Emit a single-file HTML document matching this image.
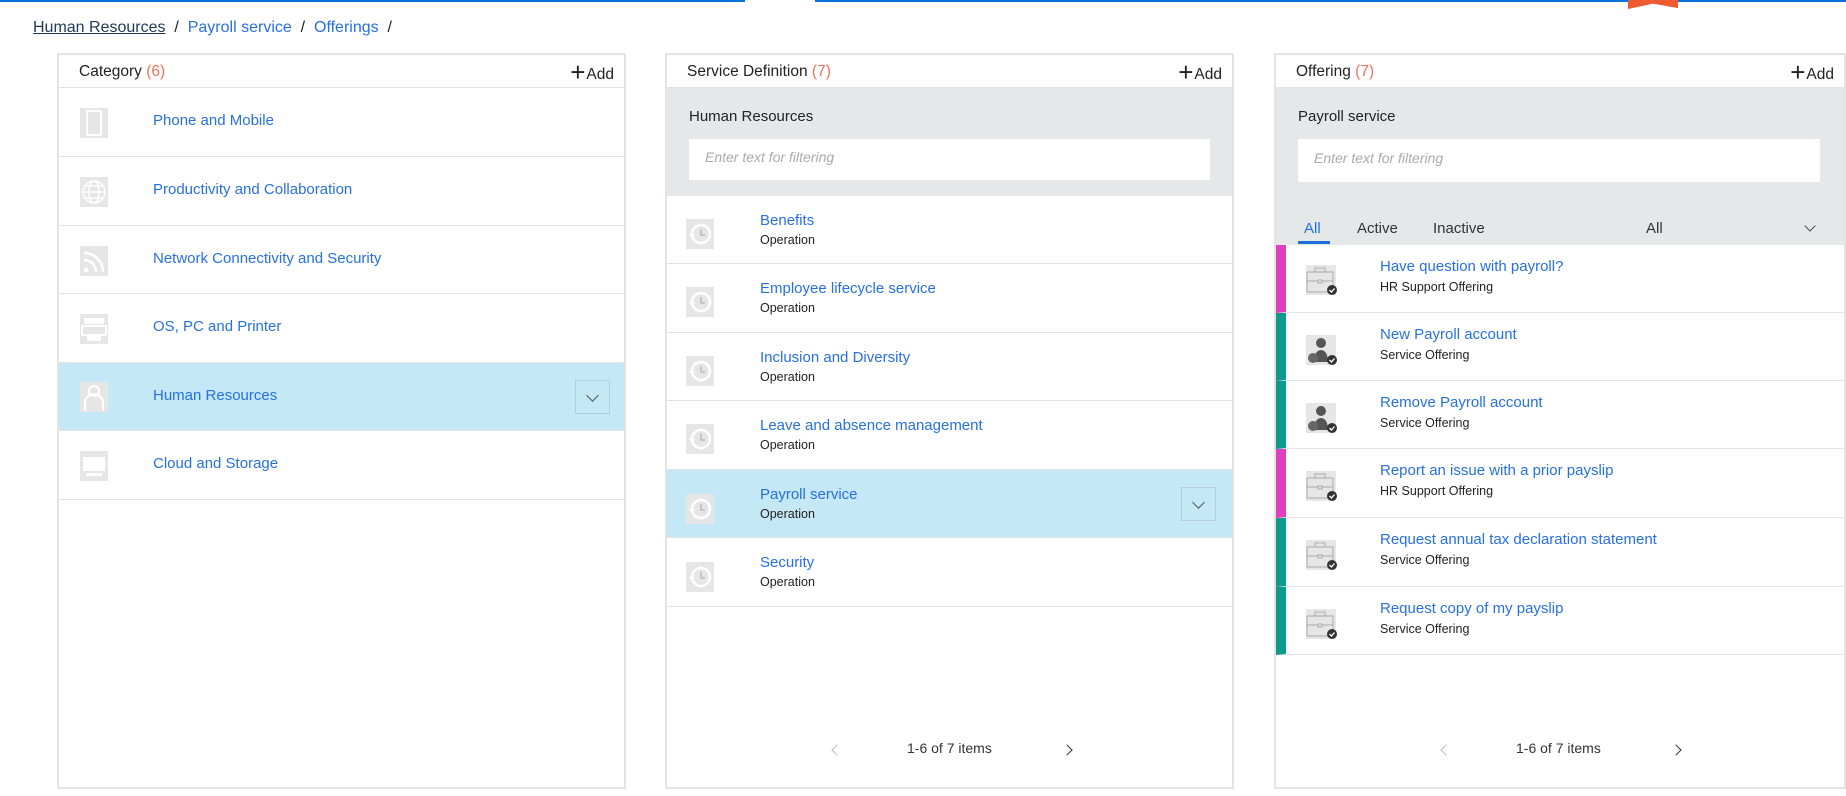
<!DOCTYPE html>
<html><head><meta charset="utf-8"><style>
*{box-sizing:border-box;margin:0;padding:0}
body{width:1846px;height:796px;position:relative;background:#fff;font-family:"Liberation Sans",sans-serif;overflow:hidden;color:#222}
.a{position:absolute}
.lnk{color:#2770e0}
.panel{position:absolute;top:53px;height:736px;border:2px solid #e4e4e4;background:#fff}
.hdr{position:absolute;left:0;right:0;top:0;height:33px;border-bottom:1px solid #e4e4e4;font-size:15.5px}
.hdr .t{position:absolute;left:20px;top:8px}
.hdr .t span{color:#f0705a}
.hdr .add{position:absolute;right:10px;top:3px;font-size:15.5px;line-height:24px}
.hdr .add b{font-weight:normal;font-size:26px;position:relative;top:2px;margin-right:1px}
.row{position:absolute;left:0;right:0;border-bottom:1px solid #e4e4e4}
.ico{position:absolute;width:28px;height:30px;background:#e6e6e6}
.ico svg{position:absolute;left:0;top:0}
.sel{background:#c5e8f7}
.chev{position:absolute;width:35px;height:34px;border:1px solid #b9ccd6}
.chev:after{content:"";position:absolute;left:12px;top:10px;width:8px;height:8px;border-right:1px solid #555;border-bottom:1px solid #555;transform:rotate(45deg)}
.tt{position:absolute;font-size:15px;color:#2770e0}
.st{position:absolute;font-size:12.5px;color:#222}
.gray{position:absolute;left:0;right:0;background:#e5e8e9}
.inp{position:absolute;background:#fff;font-size:14px;font-style:italic;color:#aaa;padding:10px 16px}
.pg{position:absolute;font-size:14px;color:#333}
.ar{position:absolute;width:8px;height:8px;border-right:1.5px solid #333;border-top:1.5px solid #333;transform:rotate(45deg)}
.ar.l{transform:rotate(-135deg);border-color:#bbb}
</style></head><body>
<div class="a" style="left:0;top:0;width:1846px;height:2px;background:#0a74d8"></div>
<div class="a" style="left:745px;top:0;width:70px;height:2px;background:#fff"></div>
<div class="a" style="left:1628px;top:0;width:50px;height:9px;background:#f05a30;clip-path:polygon(0 0,100% 0,100% 90%,50% 40%,0 100%)"></div>

<div class="a" style="left:33px;top:19px;font-size:16px">
<span style="color:#203a5a;text-decoration:underline">Human Resources</span>&nbsp; / &nbsp;<span class="lnk">Payroll service</span>&nbsp; / &nbsp;<span class="lnk">Offerings</span>&nbsp; /
</div>

<svg width="0" height="0" style="position:absolute">
<defs>
<symbol id="clk" viewBox="0 0 28 30"><circle cx="15" cy="15" r="9" fill="none" stroke="#fff" stroke-width="2.5"/><path d="M15 10v6h4" fill="none" stroke="#bbb" stroke-width="1.5"/><path d="M3 15l3 4 3-4" fill="#fff"/></symbol>
<symbol id="brf" viewBox="0 0 32 30"><rect x="1" y="7" width="26" height="20" fill="none" stroke="#aaa" stroke-width="1"/><rect x="9" y="3" width="10" height="4" fill="none" stroke="#aaa"/><path d="M1 16h26" stroke="#aaa"/><rect x="12" y="15" width="4" height="3" fill="#e6e6e6" stroke="#aaa"/><circle cx="26" cy="25" r="5" fill="#333"/><path d="M23.5 25l2 2 3-3.5" fill="none" stroke="#fff" stroke-width="1.3"/></symbol>
<symbol id="usr" viewBox="0 0 32 30"><circle cx="15" cy="8" r="5" fill="#555"/><path d="M8 27c0-8 3-12 7-12s7 4 7 12z" fill="#555"/><circle cx="7" cy="23" r="5" fill="#666"/><circle cx="26" cy="25" r="5" fill="#333"/><path d="M23.5 25l2 2 3-3.5" fill="none" stroke="#fff" stroke-width="1.3"/></symbol>
</defs></svg>

<!-- Category -->
<div class="panel" style="left:57px;width:569px">
<div class="hdr"><div class="t">Category <span>(6)</span></div><div class="add"><b>+</b>Add</div></div>
<div class="row" style="top:33px;height:69px"><div class="ico" style="left:21px;top:20px"><svg width="28" height="30"><rect x="7" y="3" width="14" height="24" fill="none" stroke="#fff" stroke-width="2"/></svg></div><div class="tt" style="left:94px;top:24px">Phone and Mobile</div></div>
<div class="row" style="top:102px;height:69px"><div class="ico" style="left:21px;top:20px"><svg width="28" height="30"><circle cx="14" cy="15" r="11" fill="none" stroke="#fff" stroke-width="1.5"/><ellipse cx="14" cy="15" rx="5" ry="11" fill="none" stroke="#fff" stroke-width="1.5"/><path d="M3 15h22M5 9h18M5 21h18" stroke="#fff" stroke-width="1.5"/></svg></div><div class="tt" style="left:94px;top:24px">Productivity and Collaboration</div></div>
<div class="row" style="top:171px;height:68px"><div class="ico" style="left:21px;top:20px"><svg width="28" height="30"><circle cx="6" cy="24" r="2.5" fill="#fff"/><path d="M4 14a12 12 0 0 1 12 12M4 7a19 19 0 0 1 19 19" fill="none" stroke="#fff" stroke-width="2.5"/></svg></div><div class="tt" style="left:94px;top:24px">Network Connectivity and Security</div></div>
<div class="row" style="top:239px;height:69px"><div class="ico" style="left:21px;top:20px"><svg width="28" height="30"><rect x="4" y="4" width="20" height="6" fill="#fff"/><rect x="2" y="12" width="24" height="9" fill="none" stroke="#fff" stroke-width="2"/><rect x="7" y="22" width="14" height="5" fill="#fff"/></svg></div><div class="tt" style="left:94px;top:24px">OS, PC and Printer</div></div>
<div class="row sel" style="top:308px;height:68px"><div class="ico" style="left:21px;top:19px"><svg width="28" height="30"><circle cx="14" cy="9" r="5" fill="none" stroke="#fff" stroke-width="2"/><path d="M5 29v-8a9 9 0 0 1 18 0v8" fill="none" stroke="#fff" stroke-width="2"/></svg></div><div class="tt" style="left:94px;top:24px">Human Resources</div><div class="chev" style="left:516px;top:17px"></div></div>
<div class="row" style="top:376px;height:69px"><div class="ico" style="left:21px;top:20px"><svg width="28" height="30"><rect x="3" y="6" width="22" height="14" fill="#fff"/><rect x="6" y="22" width="16" height="3" fill="#fff"/></svg></div><div class="tt" style="left:94px;top:24px">Cloud and Storage</div></div>
</div>

<!-- Service -->
<div class="panel" style="left:665px;width:569px">
<div class="hdr"><div class="t">Service Definition <span>(7)</span></div><div class="add"><b>+</b>Add</div></div>
<div class="gray" style="top:33px;height:108px"><div class="a" style="left:22px;top:20px;font-size:15px">Human Resources</div><div class="inp" style="left:22px;top:51px;width:521px;height:41px">Enter text for filtering</div></div>
<div class="row" style="top:141px;height:68px"><div class="ico" style="left:19px;top:23px"><svg width="28" height="30"><use href="#clk"/></svg></div><div class="tt" style="left:93px;top:16px">Benefits</div><div class="st" style="left:93px;top:37px">Operation</div></div>
<div class="row" style="top:209px;height:69px"><div class="ico" style="left:19px;top:23px"><svg width="28" height="30"><use href="#clk"/></svg></div><div class="tt" style="left:93px;top:16px">Employee lifecycle service</div><div class="st" style="left:93px;top:37px">Operation</div></div>
<div class="row" style="top:278px;height:68px"><div class="ico" style="left:19px;top:23px"><svg width="28" height="30"><use href="#clk"/></svg></div><div class="tt" style="left:93px;top:16px">Inclusion and Diversity</div><div class="st" style="left:93px;top:37px">Operation</div></div>
<div class="row" style="top:346px;height:69px"><div class="ico" style="left:19px;top:23px"><svg width="28" height="30"><use href="#clk"/></svg></div><div class="tt" style="left:93px;top:16px">Leave and absence management</div><div class="st" style="left:93px;top:37px">Operation</div></div>
<div class="row sel" style="top:415px;height:68px"><div class="ico" style="left:19px;top:24px"><svg width="28" height="30"><use href="#clk"/></svg></div><div class="tt" style="left:93px;top:16px">Payroll service</div><div class="st" style="left:93px;top:37px">Operation</div><div class="chev" style="left:514px;top:17px"></div></div>
<div class="row" style="top:483px;height:69px"><div class="ico" style="left:19px;top:24px"><svg width="28" height="30"><use href="#clk"/></svg></div><div class="tt" style="left:93px;top:16px">Security</div><div class="st" style="left:93px;top:37px">Operation</div></div>
<div class="ar l" style="left:166px;top:691px"></div>
<div class="pg" style="left:240px;top:685px">1-6 of 7 items</div>
<div class="ar" style="left:396px;top:691px"></div>
</div>

<!-- Offering -->
<div class="panel" style="left:1274px;width:572px">
<div class="hdr"><div class="t">Offering <span>(7)</span></div><div class="add"><b>+</b>Add</div></div>
<div class="gray" style="top:33px;height:157px">
<div class="a" style="left:22px;top:20px;font-size:15px">Payroll service</div>
<div class="inp" style="left:22px;top:51px;width:522px;height:43px;padding-top:11px">Enter text for filtering</div>
<div class="a" style="left:28px;top:132px;font-size:15px;color:#2770e0">All</div>
<div class="a" style="left:22px;top:153px;width:32px;height:3px;background:#1a6fd8"></div>
<div class="a" style="left:81px;top:132px;font-size:15px;color:#333">Active</div>
<div class="a" style="left:157px;top:132px;font-size:15px;color:#333">Inactive</div>
<div class="a" style="left:370px;top:132px;font-size:15px;color:#333">All</div>
<div class="a" style="left:530px;top:134px;width:8px;height:8px;border-right:1px solid #444;border-bottom:1px solid #444;transform:rotate(45deg)"></div>
</div>
<div class="row" style="top:190px;height:68px;border-left:10px solid #e040c0"><div class="ico" style="left:20px;top:20px;width:30px;background:#e6e6e6"><svg width="32" height="30" style="overflow:visible"><use href="#brf"/></svg></div><div class="tt" style="left:94px;top:13px">Have question with payroll?</div><div class="st" style="left:94px;top:35px">HR Support Offering</div></div>
<div class="row" style="top:258px;height:68px;border-left:10px solid #0e9b8e"><div class="ico" style="left:20px;top:22px;width:30px"><svg width="32" height="30" style="overflow:visible"><use href="#usr"/></svg></div><div class="tt" style="left:94px;top:13px">New Payroll account</div><div class="st" style="left:94px;top:35px">Service Offering</div></div>
<div class="row" style="top:326px;height:68px;border-left:10px solid #0e9b8e"><div class="ico" style="left:20px;top:22px;width:30px"><svg width="32" height="30" style="overflow:visible"><use href="#usr"/></svg></div><div class="tt" style="left:94px;top:13px">Remove Payroll account</div><div class="st" style="left:94px;top:35px">Service Offering</div></div>
<div class="row" style="top:394px;height:69px;border-left:10px solid #e040c0"><div class="ico" style="left:20px;top:22px;width:30px"><svg width="32" height="30" style="overflow:visible"><use href="#brf"/></svg></div><div class="tt" style="left:94px;top:13px">Report an issue with a prior payslip</div><div class="st" style="left:94px;top:35px">HR Support Offering</div></div>
<div class="row" style="top:463px;height:69px;border-left:10px solid #0e9b8e"><div class="ico" style="left:20px;top:22px;width:30px"><svg width="32" height="30" style="overflow:visible"><use href="#brf"/></svg></div><div class="tt" style="left:94px;top:13px">Request annual tax declaration statement</div><div class="st" style="left:94px;top:35px">Service Offering</div></div>
<div class="row" style="top:532px;height:68px;border-left:10px solid #0e9b8e"><div class="ico" style="left:20px;top:22px;width:30px"><svg width="32" height="30" style="overflow:visible"><use href="#brf"/></svg></div><div class="tt" style="left:94px;top:13px">Request copy of my payslip</div><div class="st" style="left:94px;top:35px">Service Offering</div></div>
<div class="ar l" style="left:166px;top:691px"></div>
<div class="pg" style="left:240px;top:685px">1-6 of 7 items</div>
<div class="ar" style="left:396px;top:691px"></div>
</div>
</body></html>
